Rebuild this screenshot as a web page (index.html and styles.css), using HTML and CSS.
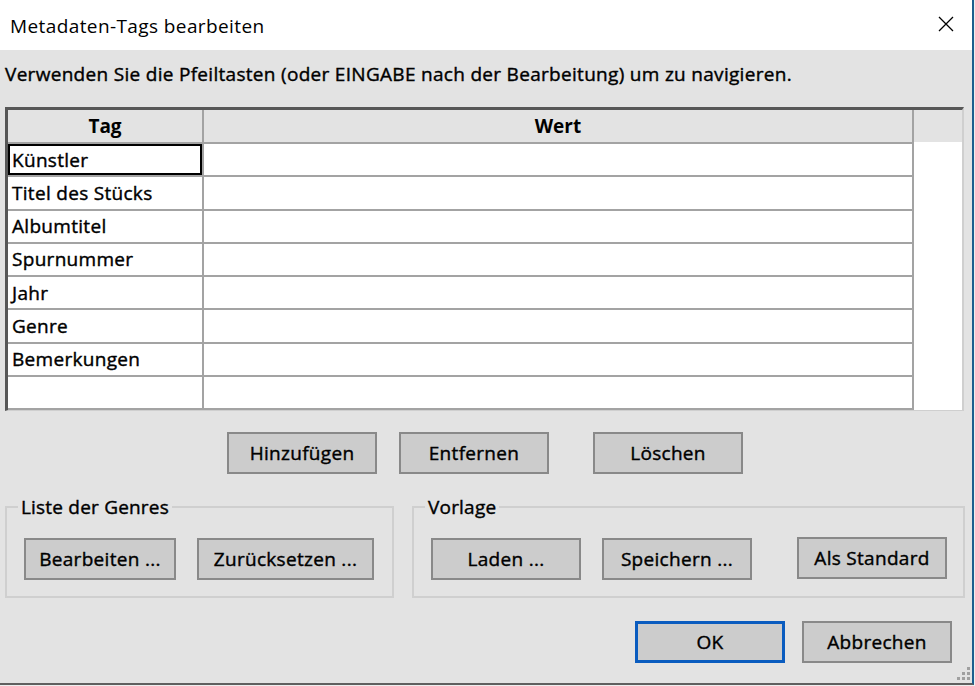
FILE: index.html
```html
<!DOCTYPE html>
<html lang="de">
<head>
<meta charset="utf-8">
<title>Metadaten-Tags bearbeiten</title>
<link rel="stylesheet" href="styles.css">
</head>
<body>
<div class="window">
  <div class="titlebar">
    <span class="title">Metadaten-Tags bearbeiten</span>
    <svg class="close" width="16" height="16" viewBox="0 0 16 16"><path d="M1 1 L15 15 M15 1 L1 15" stroke="#000" stroke-width="1.3" fill="none"/></svg>
  </div>
  <div class="content">
    <p class="hint">Verwenden Sie die Pfeiltasten (oder EINGABE nach der Bearbeitung) um zu navigieren.</p>
    <div class="grid-frame">
      <div class="grid">
        <div class="hcell">Tag</div><div class="hcell">Wert</div>
        <div class="cell focus">Künstler</div><div class="cell"></div>
        <div class="cell">Titel des Stücks</div><div class="cell"></div>
        <div class="cell">Albumtitel</div><div class="cell"></div>
        <div class="cell">Spurnummer</div><div class="cell"></div>
        <div class="cell">Jahr</div><div class="cell"></div>
        <div class="cell">Genre</div><div class="cell"></div>
        <div class="cell">Bemerkungen</div><div class="cell"></div>
        <div class="cell"></div><div class="cell"></div>
      </div>
      <div class="filler"><div class="filler-head"></div><div class="filler-body"></div></div>
    </div>
    <div class="actions">
      <button class="btn add">Hinzufügen</button>
      <button class="btn remove">Entfernen</button>
      <button class="btn clear">Löschen</button>
    </div>
    <div class="groups">
      <div class="group genres">
        <span class="group-title">Liste der Genres</span>
        <div class="group-buttons">
          <button class="btn w152">Bearbeiten ...</button>
          <button class="btn w177 gap21">Zurücksetzen ...</button>
        </div>
      </div>
      <div class="group preset">
        <span class="group-title">Vorlage</span>
        <div class="group-buttons">
          <button class="btn">Laden ...</button>
          <button class="btn gap21">Speichern ...</button>
          <button class="btn gap45 up1">Als Standard</button>
        </div>
      </div>
    </div>
    <div class="footer">
      <button class="btn default">OK</button>
      <button class="btn cancel">Abbrechen</button>
    </div>
  </div>
  <div class="grip">
    <i></i><i></i><i></i><i></i><i></i><i></i>
  </div>
</div>
</body>
</html>
```
FILE: styles.css
```css
html, body {
  margin: 0;
  padding: 0;
}
body {
  width: 975px;
  height: 686px;
  background: #eeeeee;
  font-family: "Open Sans", "Noto Sans", sans-serif;
  color: #000;
  overflow: hidden;
}
.window {
  position: relative;
  width: 972px;
  height: 683px;
  background: #e3e3e3;
  border-right: 2px solid #1d5f8e;
  border-bottom: 2px solid #5f5f5f;
  display: flex;
  flex-direction: column;
}
.titlebar {
  height: 50px;
  background: #ffffff;
  display: flex;
  align-items: center;
  justify-content: space-between;
  padding: 2px 18px 0 10px;
  box-sizing: border-box;
}
.title {
  font-size: 19px;
  letter-spacing: 0.4px;
  font-weight: 400;
}
.close {
  display: block;
  margin-top: -4px;
}
.content {
  padding: 0 7px 0 5px;
  display: flex;
  flex-direction: column;
}
.hint {
  margin: 12px 0 0 0;
  font-size: 19px;
  letter-spacing: 0.3px;
  line-height: 24px;
  -webkit-text-stroke: 0.4px #000;
}
.grid-frame {
  margin-top: 21px;
  margin-right: 1px;
  display: flex;
  border-top: 3px solid #575757;
  border-left: 3px solid #575757;
  border-right: 2px solid #cfcfcf;
  border-bottom: 1px solid #cfcfcf;
}
.grid {
  display: grid;
  grid-template-columns: 194px 708px;
  grid-template-rows: 32px repeat(8, 31.25px);
  gap: 2px;
  background: #a3a3a3;
  border-right: 2px solid #a3a3a3;
  border-bottom: 2px solid #a3a3a3;
}
.hcell {
  background: #e3e3e3;
  font-weight: 700;
  font-size: 19px;
  display: flex;
  align-items: center;
  justify-content: center;
}
.cell {
  background: #ffffff;
  font-size: 19px;
  letter-spacing: 0.3px;
  display: flex;
  align-items: center;
  padding-left: 4px;
  -webkit-text-stroke: 0.4px #000;
}
.cell.focus {
  box-shadow: inset 0 0 0 2px #000;
}
.filler {
  flex: 1;
  display: flex;
  flex-direction: column;
  background: #ffffff;
}
.filler-head {
  height: 32px;
  background: #e3e3e3;
}
.filler-body {
  flex: 1;
}
.btn {
  font-family: inherit;
  font-size: 19px;
  letter-spacing: 0.3px;
  color: #000;
  width: 150px;
  height: 42px;
  background: #cccccc;
  border: 2px solid #898989;
  padding: 0;
  margin: 0;
  -webkit-text-stroke: 0.4px #000;
}
.actions {
  margin-top: 21px;
  display: flex;
  padding-left: 222px;
}
.btn.remove {
  margin-left: 22px;
}
.btn.clear {
  margin-left: 44px;
}
.groups {
  margin-top: 32px;
  display: flex;
  gap: 18px;
}
.group {
  border: 2px solid #cfcfcf;
  padding: 0 0 16px 17px;
  display: flex;
  flex-direction: column;
}
.group.genres {
  width: 389px;
  box-sizing: border-box;
}
.group.preset {
  flex: 1;
}
.group-title {
  align-self: flex-start;
  margin: -12px 0 0 -6px;
  padding: 0 3px;
  background: #e3e3e3;
  font-size: 19px;
  letter-spacing: 0.2px;
  line-height: 22px;
  -webkit-text-stroke: 0.4px #000;
}
.group-buttons {
  margin-top: 20px;
  display: flex;
  align-items: flex-start;
}
.btn.w152 { width: 152px; }
.btn.w177 { width: 177px; }
.btn.gap21 { margin-left: 21px; }
.btn.gap45 { margin-left: 45px; }
.btn.up1 { margin-top: -1px; }
.footer {
  margin-top: 23px;
  display: flex;
  justify-content: flex-end;
  padding-right: 13px;
  gap: 17px;
}
.btn.default {
  border: 3px solid #0a5cbf;
}
.grip {
  position: absolute;
  right: 2px;
  bottom: 3px;
  display: grid;
  grid-template-columns: repeat(3, 3px);
  grid-template-rows: repeat(3, 3px);
  gap: 2px;
}
.grip i {
  display: block;
  width: 3px;
  height: 3px;
  background: #a0a0a0;
}
.grip i:nth-child(1) { grid-column: 3; grid-row: 1; }
.grip i:nth-child(2) { grid-column: 2; grid-row: 2; }
.grip i:nth-child(3) { grid-column: 3; grid-row: 2; }
.grip i:nth-child(4) { grid-column: 1; grid-row: 3; }
.grip i:nth-child(5) { grid-column: 2; grid-row: 3; }
.grip i:nth-child(6) { grid-column: 3; grid-row: 3; }
```
